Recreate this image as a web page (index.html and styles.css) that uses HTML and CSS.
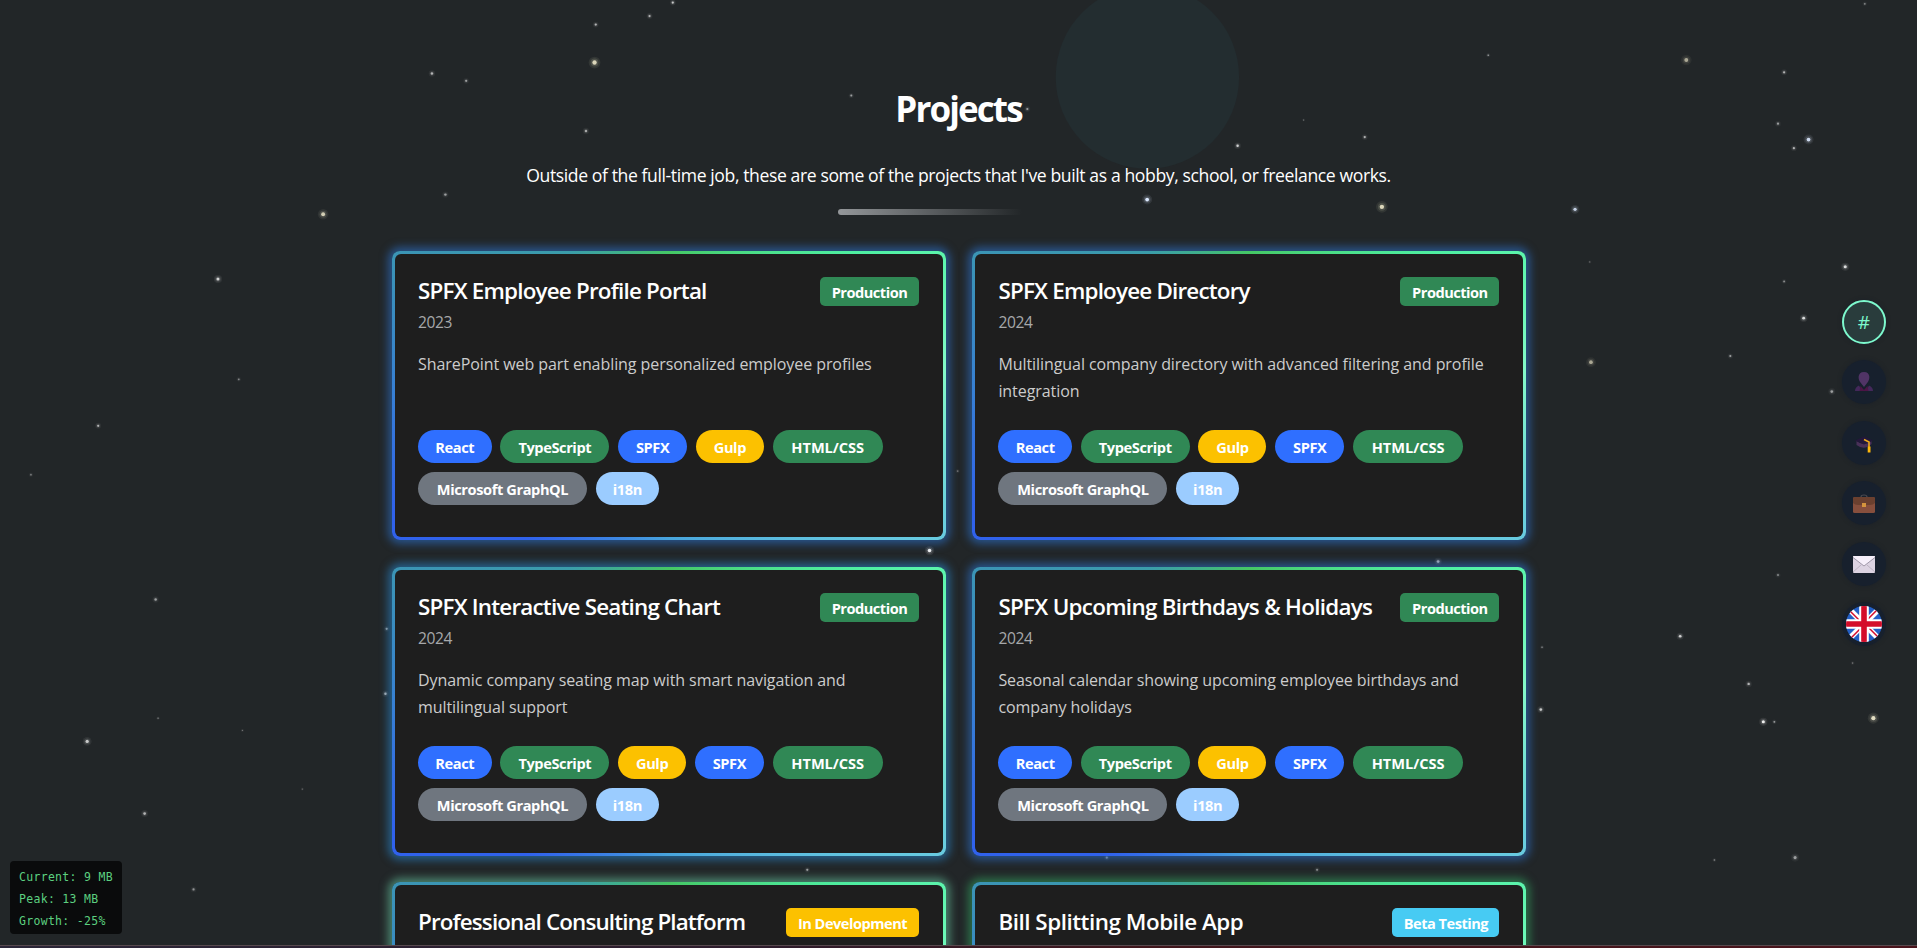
FILE: index.html
```html
<!DOCTYPE html>
<html lang="en">
<head>
<meta charset="utf-8">
<title>Projects</title>
<link rel="stylesheet" href="styles.css">
</head>
<body>
<svg class="sky" viewBox="0 0 1568 775" preserveAspectRatio="none" id="sky">
<circle cx="938.5" cy="63" r="75" fill="#232d30"/>
</svg>
<main class="page">
<header class="intro">
<h1>Projects</h1>
<p>Outside of the full-time job, these are some of the projects that I've built as a hobby, school, or freelance works.</p>
<div class="rule"></div>
</header>
<section class="grid">
<article class="card glow-blue"><div class="inner">
<div class="head"><h2>SPFX Employee Profile Portal</h2><span class="status green">Production</span></div>
<div class="year">2023</div>
<p class="desc">SharePoint web part enabling personalized employee profiles</p>
<div class="tags"><span class="tag blue react">React</span><span class="tag green ts">TypeScript</span><span class="tag blue spfx">SPFX</span><span class="tag amber gulp">Gulp</span><span class="tag green html">HTML/CSS</span><span class="tag gray graph">Microsoft GraphQL</span><span class="tag sky-blue intl">i18n</span></div>
</div></article>
<article class="card glow-blue"><div class="inner">
<div class="head"><h2>SPFX Employee Directory</h2><span class="status green">Production</span></div>
<div class="year">2024</div>
<p class="desc">Multilingual company directory with advanced filtering and profile<br>integration</p>
<div class="tags"><span class="tag blue react">React</span><span class="tag green ts">TypeScript</span><span class="tag amber gulp">Gulp</span><span class="tag blue spfx">SPFX</span><span class="tag green html">HTML/CSS</span><span class="tag gray graph">Microsoft GraphQL</span><span class="tag sky-blue intl">i18n</span></div>
</div></article>
<article class="card glow-cyan"><div class="inner">
<div class="head"><h2>SPFX Interactive Seating Chart</h2><span class="status green">Production</span></div>
<div class="year">2024</div>
<p class="desc">Dynamic company seating map with smart navigation and<br>multilingual support</p>
<div class="tags"><span class="tag blue react">React</span><span class="tag green ts">TypeScript</span><span class="tag amber gulp">Gulp</span><span class="tag blue spfx">SPFX</span><span class="tag green html">HTML/CSS</span><span class="tag gray graph">Microsoft GraphQL</span><span class="tag sky-blue intl">i18n</span></div>
</div></article>
<article class="card glow-blue"><div class="inner">
<div class="head"><h2 class="wide">SPFX Upcoming Birthdays &amp; Holidays</h2><span class="status green">Production</span></div>
<div class="year">2024</div>
<p class="desc">Seasonal calendar showing upcoming employee birthdays and<br>company holidays</p>
<div class="tags"><span class="tag blue react">React</span><span class="tag green ts">TypeScript</span><span class="tag amber gulp">Gulp</span><span class="tag blue spfx">SPFX</span><span class="tag green html">HTML/CSS</span><span class="tag gray graph">Microsoft GraphQL</span><span class="tag sky-blue intl">i18n</span></div>
</div></article>
<article class="card glow-mint"><div class="inner">
<div class="head"><h2 class="tight">Professional Consulting Platform</h2><span class="status amber dev">In Development</span></div>
</div></article>
<article class="card glow-green"><div class="inner">
<div class="head"><h2 class="loose">Bill Splitting Mobile App</h2><span class="status cyan beta">Beta Testing</span></div>
</div></article>
</section>
</main>
<nav class="dock">
<a class="dot active">#</a>
<a class="dot"><svg width="20" height="20" viewBox="0 0 20 20"><path d="M1 19q0-4 4-5.500L8 19zM19 19q0-4-4-5.500L12 19z" fill="#43285a"/><path d="M6.500 14l3.500 4 3.500-4 1 5h-9z" fill="#4c1546"/><path d="M10 0c7 0 6 8 3.500 10.500L10 15l-3.500-4.500C4 8 3 0 10 0z" fill="#513466"/></svg></a>
<a class="dot"><svg width="22" height="22" viewBox="0 0 22 22"><path d="M3.500 9q8 6 15 0v3q-7 7-15 1z" fill="#493058"/><path d="M2 8.500l9-4 9 4-9 4z" fill="#23173a"/><path d="M11 7.500l5 2.500v6" fill="none" stroke="#eda91d" stroke-width="1.6"/><path d="M14.700 14.500h2.800v6h-2.800z" fill="#ffb70b"/></svg></a>
<a class="dot"><svg class="case" width="22" height="20" viewBox="0 0 22 20"><path d="M8 3q0-2 3-2t3 2" fill="none" stroke="#4b4a50" stroke-width="1.200"/><rect y="3" width="22" height="16" rx="1.500" fill="#874f3d"/><path d="M1.500 3h19q1.500 0 1.500 2v4q-2 2-5 2H5Q2 11 0 9V5q0-2 1.500-2z" fill="#6b402f"/><rect x="9" y="9" width="4" height="4" fill="#d4943d"/></svg></a>
<a class="dot"><svg class="mail" width="22" height="17" viewBox="0 0 22 17"><rect width="22" height="17" rx="1" fill="#dcd3e2"/><path d="M0 16l8-7M22 16l-8-7" stroke="#b5acbb" stroke-width=".8"/><path d="M0 1q0-1 1-1h20q1 0 1 1L11 10z" fill="#f6effa"/><path d="M0 1.500l11 8.500 11-8.500" fill="none" stroke="#8e8798" stroke-width=".8"/></svg></a>
<a class="dot"><svg width="36" height="36" viewBox="0 0 36 36"><clipPath id="disc"><circle cx="18" cy="18" r="18"/></clipPath><g clip-path="url(#disc)"><path fill="#2460c6" d="M0 0h36v36H0z"/><path d="M0 0l36 36M36 0L0 36" stroke="#fff" stroke-width="5.600"/><path d="M0 1L17 18M19 18L36 35M35 0L18 17M18 19L1 36" stroke="#d40d2a" stroke-width="1.500"/><path d="M18 0v36M0 18h36" stroke="#fff" stroke-width="9.600"/><path d="M18 0v36M0 18h36" stroke="#d40d2a" stroke-width="5.600"/></g></svg></a>
</nav>
<aside class="memory"><div>Current: 9 MB</div><div>Peak: 13 MB</div><div>Growth: -25%</div></aside>
<div class="edge"></div>
<script src="sky.js"></script>
</body>
</html>
```
FILE: styles.css
```css
* { box-sizing: border-box; }
html, body { margin: 0; height: 948px; overflow: hidden; }
body { background: #222628; color: #fff; font-family: "Open Sans", "Noto Sans", sans-serif; position: relative; }
.sky { position: absolute; left: 0; top: 0; width: 1917px; height: 948px; }
.page { position: relative; height: 948px; overflow: hidden; padding-top: 82px; }
.intro { display: flex; flex-direction: column; align-items: center; height: 169px; }
h1 { margin: 0; font-size: 35px; line-height: 54px; font-weight: 700; letter-spacing: -1.9px; white-space: nowrap; }
.intro p { margin: 25px 0 0; font-size: 17.6px; line-height: 28px; letter-spacing: -0.4px; white-space: nowrap; }
.rule { width: 184px; height: 6px; margin: 20px 0 0 -58px; border-radius: 3px; background: linear-gradient(90deg, #94979a, rgba(148,151,154,0)); }
.grid { display: grid; grid-template-columns: 554px 554px; gap: 26.500px 26.400px; margin-left: 392px; grid-auto-rows: 289px; }
.card { padding: 3px; border-radius: 8px; background: conic-gradient(from 0deg at 50% 50%, #45c765 0deg, #4ff0a4 55deg, #68f8b4 70deg, #84f8c8 85deg, #68cbe0 117deg, #48a5dd 180deg, #3062ec 225deg, #3062ec 247deg, #377fd5 270deg, #3b94b5 297deg, #3b9daa 325deg, #45c765 360deg); }
.glow-blue { box-shadow: 0 0 9px 4px rgba(43,107,190,.65); }
.glow-cyan { box-shadow: 0 0 9px 4px rgba(40,126,190,.65); }
.glow-mint { box-shadow: 0 0 9px 4px rgba(90,170,140,.7); }
.glow-green { box-shadow: 0 0 9px 4px rgba(48,150,90,.65); }
.inner { height: 100%; padding: 22px 24px 0 23px; border-radius: 6px; background: #1e1e1e; }
.head { display: flex; justify-content: space-between; height: 31px; }
h2 { margin: -1px 0 0; font-size: 22.400px; line-height: 32px; font-weight: 600; letter-spacing: -0.79px; white-space: nowrap; }
h2.wide { letter-spacing: -0.7px; }
h2.tight { letter-spacing: -0.86px; }
h2.loose { letter-spacing: -0.47px; }
.status { width: 99px; height: 29px; margin-top: 1px; border-radius: 5px; font-size: 14.600px; line-height: 31px; font-weight: 700; letter-spacing: -0.5px; text-align: center; white-space: nowrap; }
.status.dev { width: 133px; }
.status.beta { width: 107px; }
.year { height: 31px; font-size: 15.600px; line-height: 30px; color: #a6a8aa; letter-spacing: -0.4px; }
.desc { margin: 13px 0 0; height: 54px; font-size: 16px; line-height: 27px; color: #ccc; letter-spacing: -0.07px; white-space: nowrap; }
.tags { display: flex; flex-wrap: wrap; gap: 9px 8.800px; margin-top: 25px; }
.tag { height: 33px; border-radius: 17px; font-size: 14.600px; line-height: 35px; font-weight: 700; letter-spacing: -0.4px; text-align: center; white-space: nowrap; }
.react { width: 73.500px; }
.ts { width: 109px; }
.spfx { width: 69px; }
.gulp { width: 68px; }
.html { width: 110px; letter-spacing: -0.05px; }
.graph { width: 169px; }
.intl { width: 63px; }
.blue { background: #2f6fff; }
.green { background: #308855; }
.amber { background: #fcc100; }
.gray { background: #6f767f; }
.sky-blue { background: #9bccff; }
.cyan { background: #47cbf3; }
.dock { position: absolute; left: 1842px; top: 299.500px; display: flex; flex-direction: column; gap: 16.500px; }
.dot { width: 44px; height: 44px; border-radius: 50%; background: #17202d; display: flex; align-items: center; justify-content: center; box-shadow: 0 0 4px rgba(20,28,42,.5); }
.dot.active { border: 2px solid #7df9cd; background: #293c3c; color: #7df9cd; font-size: 19px; }
.case, .mail { margin-top: 2px; }
.memory { position: absolute; left: 10px; top: 861px; width: 112px; height: 73px; padding: 5px 9px 3px; border-radius: 4px; background: #0a0b0c; color: #5cd080; font: 11.500px/22px "DejaVu Sans Mono", monospace; letter-spacing: 0.300px; white-space: nowrap; }
.edge { position: absolute; left: 0; top: 945px; width: 1917px; height: 3px; border-top: 1px solid #57494e; background: linear-gradient(90deg, #2b2638, #2e1c2c 40%, #40161c 60%, #4a141c); }
```
FILE: sky.js
```js
// x, y, radius, brightness
const stars = [
[550,2,1,.7],[531,13,1,.6],[487,20,1,.6],[486,51,2,.85],[353,60,1.1,.6],[381,66,1,.5],[696,78,.9,.5],[840,89,1,.5],[479,107,1.1,.55],
[1066,98,.5,.4],[1116,112,1,.6],[1012,119,1.1,.75],[938,163,1.700,1],[1130,169,2,.85],[1288,171,1.500,.85],[1217,45,.7,.5],[1379,49,1.800,.6],
[1459,59,1,.6],[1454,101,1,.5],[1467,121,1,.6],[1479,114,1.700,.9],[1525,3,.8,.4],[364,159,1.100,.5],[264,175,1.800,.8],[178,228,1.400,.75],
[195,310,.8,.4],[80,348,1,.6],[25,388,.8,.35],[127,490,1.100,.5],[71,606,1.500,.7],[129,587,.6,.4],[198,597,.6,.3],[247,645,.6,.3],
[118,665,1.200,.6],[158,727,1,.45],[760,450,1.600,.95],[1176,459,1.300,.6],[316,514,1,.5],[315,567,1.100,.6],[1300,214,.6,.3],[1509,218,1.400,.8],
[1459,230,.8,.45],[1475,260,1.300,.8],[1301,296,1.700,.6],[1415,291,.9,.5],[1498,320,1.200,.5],[1454,470,.9,.4],[1374,520,1.200,.75],
[1261,529,.7,.4],[1515,542,.7,.3],[1430,559,1.100,.6],[1260,580,1.200,.7],[1442,590,1.400,.9],[1451,590,.8,.5],[1532,587,1.900,.9],
[1468,701,1.400,.5],[1402,703,.7,.4],[660,711,1,.5],[905,701,1,.5],[1077,711,1,.4],[783,385,.8,.3]
];
const warm = new Set([486, 1130, 1532, 264, 1379, 1301]);
const cool = new Set([1479, 938, 1288]);
const svg = document.getElementById('sky');
for (const [x, y, r, o] of stars) {
  const color = warm.has(x) ? '#f4edcf' : cool.has(x) ? '#dce9ff' : '#ffffff';
  for (const [k, a] of [[2.4, .09], [1.6, .16], [.9, 1]]) {
    const c = document.createElementNS('http://www.w3.org/2000/svg', 'circle');
    c.setAttribute('cx', x + .3);
    c.setAttribute('cy', y + .1);
    c.setAttribute('r', r * k);
    c.setAttribute('fill', color);
    c.setAttribute('opacity', o * a);
    svg.appendChild(c);
  }
}
```
